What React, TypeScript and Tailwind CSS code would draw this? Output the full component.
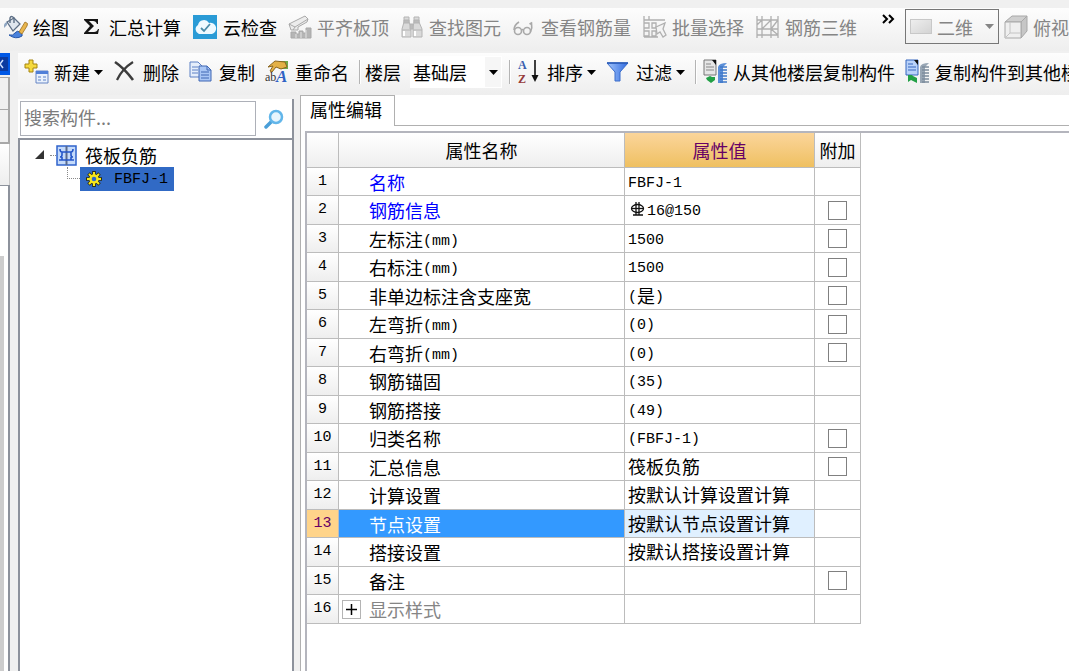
import { ReactNode } from "react";
import clsx from "clsx";

type PropertyRow = {
  name: string;
  value?: string;
  rebar?: boolean;
  extra?: boolean;
  tone?: "blue" | "gray";
  expandable?: boolean;
};

const rows: PropertyRow[] = [
  { name: "名称", value: "FBFJ-1", tone: "blue" },
  { name: "钢筋信息", value: "16@150", rebar: true, extra: true, tone: "blue" },
  { name: "左标注(mm)", value: "1500", extra: true },
  { name: "右标注(mm)", value: "1500", extra: true },
  { name: "非单边标注含支座宽", value: "(是)", extra: true },
  { name: "左弯折(mm)", value: "(0)", extra: true },
  { name: "右弯折(mm)", value: "(0)", extra: true },
  { name: "钢筋锚固", value: "(35)" },
  { name: "钢筋搭接", value: "(49)" },
  { name: "归类名称", value: "(FBFJ-1)", extra: true },
  { name: "汇总信息", value: "筏板负筋", extra: true },
  { name: "计算设置", value: "按默认计算设置计算" },
  { name: "节点设置", value: "按默认节点设置计算" },
  { name: "搭接设置", value: "按默认搭接设置计算" },
  { name: "备注", extra: true },
  { name: "显示样式", tone: "gray", expandable: true },
];

const SELECTED = 13;

// Latin letters and digits are half the width of a Chinese character
const Mixed = ({ text }: { text: string }) => (
  <>
    {text.split(/([\x20-\x7e]+)/).map((part, i) =>
      i % 2 ? (
        <span key={i} className="align-[2px] font-['Liberation_Mono',monospace] text-[15px] leading-none">
          {part}
        </span>
      ) : (
        part
      )
    )}
  </>
);

/* ---------- icons ---------- */

const PaintIcon = () => (
  <svg viewBox="0 0 24 24" className="h-6 w-6 shrink-0">
    <path d="M3 7l7-4 6 6-7 7z" fill="#dfe6ee" stroke="#5d6f86" strokeWidth="1.3" />
    <path d="M6 8V3q1-3 4 0v5" fill="none" stroke="#5d6f86" strokeWidth="1.4" />
    <path d="M3 7q-4 1-3 6l3-3z" fill="#8fa6c2" />
    <path d="M5 20q4 1 6-2t5-1 2 4q-6 4-13-1z" fill="#4a82dc" stroke="#2455a8" />
    <path d="M15 17l6-10q4 1 2 4l-5 8z" fill="#e9b64d" stroke="#9c7024" strokeWidth=".8" />
  </svg>
);

const SigmaIcon = () => (
  <svg viewBox="0 0 24 24" className="h-6 w-6 shrink-0">
    <path d="M4 4h14v5h-1q-1-3-4-3H9l5 5-6 6h6q3 0 4-3h1l-1 5H4v-1l6-7-6-6z" fill="#151515" />
  </svg>
);

const CloudIcon = () => (
  <svg viewBox="0 0 26 24" className="h-6 w-[26px] shrink-0">
    <path d="M1 0h24v24H1z" fill="#2a9bd6" />
    <path d="M7 19a5 5 0 0 1-1-9 6 6 0 0 1 11-2 5.500 5.500 0 0 1 3 11z" fill="#eff9ff" />
    <path d="M9 13l3 3 6-7" fill="none" stroke="#4b8ba8" strokeWidth="1.800" />
  </svg>
);

const AlignSlabIcon = () => (
  <svg viewBox="0 0 24 24" className="h-6 w-6 shrink-0" stroke="#a9a9a9" fill="#ececec">
    <path d="M1 9L17 1l3 3-1 3-9 5v3H3z" />
    <path d="M1 9l6 3 13-8M7 12l-2 3" fill="none" />
    <path d="M3 17h5v2h3v-3h4v2h3v-5h5v10H3z" fill="#b5b5b5" />
    <path d="M8 19v4M13 17v6M18 15v8" stroke="#e4e4e4" />
  </svg>
);

const BinocularsIcon = () => (
  <svg viewBox="0 0 24 24" className="h-6 w-6 shrink-0" stroke="#b4b4b4" fill="#dadada">
    <path d="M4 2h5v5l2 5v10H2v-8l2-7zM14 2h5v5l3 7v8h-9V12l1-5z" />
    <path d="M10 9h3v5h-3zM4 5h5v3H4zM14 5h5v3h-5z" fill="#bbb" />
    <path d="M2 15h9M13 15h9" />
    <path d="M4 16v5M15 16v5" stroke="#fff" strokeWidth="2" />
  </svg>
);

const GlassesIcon = () => (
  <svg viewBox="0 0 24 24" className="h-6 w-6 shrink-0" stroke="#a9a9a9" fill="none" strokeWidth="1.600">
    <circle cx="6" cy="16" r="3.500" />
    <circle cx="15" cy="16" r="3.500" />
    <path d="M9.500 15q1-1 2 0M2 15q0-5 5-8M18.500 17q2-4 1-9l-2 1" />
  </svg>
);

const BatchIcon = () => (
  <svg viewBox="0 0 25 24" className="h-6 w-[25px] shrink-0" stroke="#b0b0b0" fill="none" strokeWidth="1.300">
    <path d="M2 1v21M7 1v4M2 5h21M2 8h5v5H2M2 16h5v5H2M10 8h4v5h-4zM10 16h4v5h-4zM2 22h14" />
    <path d="M14 12l9-4-2 6 3 6-3 2-3-5-3 2z" fill="#f4f4f4" />
  </svg>
);

const RebarIcon = () => (
  <svg viewBox="0 0 25 24" className="h-6 w-[25px] shrink-0" stroke="#b0b0b0" fill="none" strokeWidth="1.300">
    <path d="M2 1v22M7 1v22M16 1v22M23 1v22M2 5h21M2 14h21M2 20h21M2 10l5-5M7 14l9-9M16 14l7-9M16 14l7 6" />
  </svg>
);

const CubeIcon = () => (
  <svg viewBox="0 0 24 24" className="h-6 w-6 shrink-0" stroke="#a8a8a8" fill="#dedede">
    <path d="M1 7l7-6h15l-6 6z" fill="#cfcfcf" />
    <path d="M17 7l6-6v15l-6 7z" fill="#c6c6c6" />
    <path d="M1 7h16v16H1z" fill="#efefef" />
    <path d="M6 7v11h11M6 18l-5 5" fill="none" stroke="#c4c4c4" />
  </svg>
);

const NewIcon = () => (
  <svg viewBox="0 0 25 26" className="h-[26px] w-[25px] shrink-0">
    <path d="M5 1h4v4h4v4H9v4H5V9H1V5h4z" fill="#f5d93d" stroke="#a58410" />
    <path d="M12 12h12v12H12z" fill="#e9f1fc" stroke="#6484c4" />
    <path d="M12 12h12v3H12z" fill="#4f7fd8" />
    <path d="M14 18h3M19 18h3M14 21h3M19 21h3" stroke="#8aa7d8" strokeWidth="1.500" />
  </svg>
);

const DeleteIcon = () => (
  <svg viewBox="0 0 25 24" className="h-6 w-[25px] shrink-0" stroke="#3c3c3c" fill="none">
    <path d="M2 2q9 6 18 18" strokeWidth="2.600" />
    <path d="M20 2Q9 9 4 20" strokeWidth="2.200" />
  </svg>
);

const CopyIcon = () => (
  <svg viewBox="0 0 25 24" className="h-6 w-[25px] shrink-0" stroke="#5d80c4">
    <path d="M1 2h8l4 4v11H1z" fill="#e5eefb" />
    <path d="M3 7h6M3 10h6M3 13h6" />
    <path d="M10 6h8l4 4v11H10z" fill="#a9c6f5" stroke="#3f66b4" />
    <path d="M18 6v4h4M12 12h8M12 15h8M12 18h8" fill="none" stroke="#3f66b4" />
  </svg>
);

const RenameIcon = () => (
  <svg viewBox="0 0 25 26" className="h-[26px] w-[25px] shrink-0 overflow-visible">
    <path d="M14 2h9v8h-9z" fill="#6fa84a" />
    <path d="M3 8l7-6 10 1 2 5-6 2-5-2-4 5-2-1 3-5z" fill="#e3b046" stroke="#8a6520" />
    <text x="0" y="22" fontSize="12" fontFamily="Liberation Serif, serif" fill="#333">
      ab
    </text>
    <text x="11" y="23" fontSize="17" fontWeight="bold" fontStyle="italic" fontFamily="Liberation Serif, serif" fill="#2f62c4">
      A
    </text>
  </svg>
);

const SortIcon = () => (
  <svg viewBox="0 0 25 26" className="h-[26px] w-[25px] shrink-0 overflow-visible">
    <text x="1" y="10" fontSize="12" fontWeight="bold" fontFamily="Liberation Serif, serif" fill="#3a5fae">
      A
    </text>
    <text x="1" y="24" fontSize="12" fontWeight="bold" fontFamily="Liberation Serif, serif" fill="#963a3a">
      Z
    </text>
    <path d="M18 1v16" stroke="#111" strokeWidth="1.600" />
    <path d="M14.500 16h7L18 23z" fill="#111" />
  </svg>
);

const FilterIcon = () => (
  <svg viewBox="0 0 25 24" className="h-6 w-[25px] shrink-0">
    <defs>
      <linearGradient id="funnel">
        <stop offset="0" stopColor="#a4c6fb" />
        <stop offset="1" stopColor="#2f6ae0" />
      </linearGradient>
    </defs>
    <path d="M1 3h21L14 12v9H9v-9z" fill="url(#funnel)" stroke="#3a6cca" />
    <path d="M1 3h21" stroke="#2d5cb8" strokeWidth="1.600" />
  </svg>
);

const FloorCopyIcon = ({ blue }: { blue?: boolean }) => (
  <svg viewBox="0 0 25 26" className="h-[26px] w-[25px] shrink-0">
    <path d="M1 1h12v15H1z" fill={blue ? "#b9d2fa" : "#e6e6e6"} stroke={blue ? "#3767be" : "#777"} />
    <path d="M3 5h5M3 8h8M3 11h8" stroke={blue ? "#3767be" : "#888"} />
    <path d="M9 1h4v5z" fill="#111" />
    {blue ? (
      <path d="M3 16v7l3-2 6 3v-5l-4-2-1-1z" fill="#22a046" />
    ) : (
      <path d="M3 19l4-2 2 1h3v3l-4 3-4-3z" fill="#22a046" />
    )}
    <path d="M15 24V8q1-4 9-4l-4 4v16z" fill={blue ? "#98a6b4" : "#5b8fd8"} />
    <path
      d="M17 8h7M17 11h7M17 14h7M17 17h7M17 20h7M17 23h7"
      fill="none"
      stroke={blue ? "#7c8c9c" : "#3f78c8"}
      strokeWidth="1.500"
    />
  </svg>
);

const RebarMark = () => (
  <svg viewBox="0 0 16 16" className="ml-[2px] size-4 shrink-0" stroke="#111" fill="none" strokeWidth="1.300">
    <path d="M6 1v13M9 1v13M3 14h10" />
    <ellipse cx="7.500" cy="7.500" rx="6" ry="4" />
    <path d="M1 7.500h13" />
  </svg>
);

const Caret = () => (
  <svg viewBox="0 0 9 5" className="ml-1 h-[5px] w-[9px] shrink-0" fill="currentColor">
    <path d="M0 0h9L4.500 5z" />
  </svg>
);

/* ---------- toolbar pieces ---------- */

type ToolProps = { icon: ReactNode; label: string; disabled?: boolean; menu?: boolean };

const ModeTool = ({ icon, label, disabled }: ToolProps) => (
  <button
    type="button"
    disabled={disabled}
    className="mr-[11px] flex shrink-0 items-center gap-[5px] whitespace-nowrap text-black disabled:text-[#858585]"
  >
    {icon}
    {label}
  </button>
);

const Tool = ({ icon, label, menu }: ToolProps) => (
  <button type="button" className="mr-[10px] flex shrink-0 items-center whitespace-nowrap">
    {icon}
    <span className="ml-[5px]">{label}</span>
    {menu && <Caret />}
  </button>
);

const Separator = () => <span className="h-6 w-[2px] shrink-0 border-l border-[#b4b4b4] bg-white" />;

const ModeBar = () => (
  <div className="flex h-[43px] shrink-0 items-center bg-linear-to-b from-[#fdfdfd] to-[#eeeeee] pb-[6px] pl-1">
    <ModeTool icon={<PaintIcon />} label="绘图" />
    <ModeTool icon={<SigmaIcon />} label="汇总计算" />
    <ModeTool icon={<CloudIcon />} label="云检查" />
    <ModeTool icon={<AlignSlabIcon />} label="平齐板顶" disabled />
    <ModeTool icon={<BinocularsIcon />} label="查找图元" disabled />
    <ModeTool icon={<GlassesIcon />} label="查看钢筋量" disabled />
    <ModeTool icon={<BatchIcon />} label="批量选择" disabled />
    <ModeTool icon={<RebarIcon />} label="钢筋三维" disabled />
    <button type="button" aria-label="更多" className="ml-[14px] mr-[10px] shrink-0 self-start pt-[6px]">
      <svg viewBox="0 0 13 10" className="h-[10px] w-[13px]" fill="none" stroke="#000" strokeWidth="2">
        <path d="M1 1l4 4-4 4M7 1l4 4-4 4" />
      </svg>
    </button>
    <button
      type="button"
      disabled
      className="mr-[5px] flex h-[35px] w-[94px] shrink-0 items-center border border-[#777] pl-1 text-[#858585]"
    >
      <span className="mr-[5px] h-[15px] w-[22px] border border-[#c8c8c8] bg-linear-to-br from-[#eee] to-[#d4d4d4]" />
      二维
      <span className="ml-2">
        <Caret />
      </span>
    </button>
    <ModeTool icon={<CubeIcon />} label="俯视" disabled />
  </div>
);

const EditBar = () => (
  <div className="flex h-[42px] shrink-0 items-center bg-linear-to-b from-[#fdfdfd] to-[#eeeeee] pb-1 pl-[6px]">
    <Tool icon={<NewIcon />} label="新建" menu />
    <Tool icon={<DeleteIcon />} label="删除" />
    <Tool icon={<CopyIcon />} label="复制" />
    <Tool icon={<RenameIcon />} label="重命名" />
    <Separator />
    <label htmlFor="floor" className="ml-1 mr-[9px] shrink-0">
      楼层
    </label>
    <div className="relative mr-[7px] flex h-8 w-[92px] shrink-0 items-center bg-white">
      <select id="floor" className="h-full w-full appearance-none pl-[3px] outline-none">
        <option>基础层</option>
      </select>
      <span className="pointer-events-none absolute inset-y-px right-px flex w-4 items-center justify-center bg-[#f6f6f6] pr-1">
        <Caret />
      </span>
    </div>
    <Separator />
    <span className="w-[6px] shrink-0" />
    <Tool icon={<SortIcon />} label="排序" menu />
    <Tool icon={<FilterIcon />} label="过滤" menu />
    <Separator />
    <span className="w-[6px] shrink-0" />
    <Tool icon={<FloorCopyIcon />} label="从其他楼层复制构件" />
    <Tool icon={<FloorCopyIcon blue />} label="复制构件到其他楼层" />
  </div>
);

/* ---------- left side ---------- */

// The right-hand edge of the docked module bar
const DockEdge = () => (
  <div className="flex w-[10px] shrink-0 flex-col">
    <button
      type="button"
      aria-label="关闭"
      className="flex h-[22px] shrink-0 items-center border-y-4 border-r-2 border-[#0058e6] bg-[#0b3aa0]"
    >
      <svg viewBox="0 0 6 10" className="h-[10px] w-[6px]" fill="none" stroke="#cfe0ff" strokeWidth="1.500">
        <path d="M3 1L0 5l3 4" />
      </svg>
    </button>
    <div className="mt-[2px] h-[33px] shrink-0 border-y border-r-2 border-[#a8a8a8]" />
    <div className="h-[34px] shrink-0 border-b-2 border-r-2 border-[#a8a8a8]" />
    <div className="h-[41px] shrink-0 border-r border-[#c8c8c8] bg-linear-to-b from-white to-[#eeeeee]" />
    <div className="flex-1 border-r-2 border-t border-[#8d929c] bg-white pt-[70px]">
      <div className="h-full w-1 bg-[#cdcdcd]" />
    </div>
  </div>
);

const ComponentTree = () => (
  <section className="mt-1 flex w-[276px] shrink-0 flex-col border-r-2 border-[#8d929c] bg-white">
    <div className="flex h-[39px] shrink-0 items-center pl-[2px]">
      <input
        aria-label="搜索构件"
        placeholder="搜索构件..."
        className="h-[35px] w-[236px] border border-[#adb0b8] px-[3px] pb-1 outline-none placeholder:text-[#7b7b7b]"
      />
      <button type="button" aria-label="搜索" className="ml-2">
        <svg viewBox="0 0 21 20" className="h-5 w-[21px]" fill="none">
          <path d="M2 18l6-6" stroke="#4a9fd8" strokeWidth="3.500" strokeLinecap="round" />
          <circle cx="12" cy="8" r="6" fill="#e8f5fd" stroke="#62b6ea" strokeWidth="2.500" />
        </svg>
      </button>
    </div>
    <ul className="flex-1 border-l-2 border-t-2 border-[#8d929c] pt-[3px]">
      <li>
        <div className="flex h-6 items-center pl-[15px]">
          <svg viewBox="0 0 10 10" className="mr-[5px] h-[10px] w-[10px]" fill="#333">
            <path d="M9 0v9H0z" />
          </svg>
          <span className="w-[6px] border-t border-dotted border-[#888]" />
          <svg viewBox="0 0 21 21" className="mr-2 size-[21px]">
            <path d="M1 1h19v19H1z" fill="#c4dafa" stroke="#2f63cc" strokeWidth="1.500" />
            <path d="M10.500 1v19" stroke="#5a6b8c" strokeWidth="2" />
            <path
              d="M4 4q0 3 2 3h9q2 0 2-3M3 15h15M6 7v3q0 2-2 2M15 7v3q0 2 2 2M6 12v3M15 12v3"
              fill="none"
              stroke="#2456c8"
              strokeWidth="1.600"
            />
          </svg>
          筏板负筋
        </div>
        <ul className="pl-[47px]">
          <li className="flex">
            <span className="h-3 w-[13px] border-b border-l border-dotted border-[#888]" />
            <div className="flex h-6 w-[94px] items-center bg-[#316ac5] pl-[6px]">
              <svg viewBox="0 0 16 16" className="mr-3 size-4 shrink-0">
                <path
                  d="M8 0v16M0 8h16M2.500 2.500l11 11M13.500 2.500l-11 11"
                  stroke="#2c2c10"
                  strokeWidth="3.600"
                />
                <path d="M8 1v14M1 8h14M3 3l10 10M13 3L3 13" stroke="#f6e71c" strokeWidth="2" />
                <circle cx="8" cy="8" r="3.500" fill="#316ac5" stroke="#f6e71c" strokeWidth="2.400" />
              </svg>
              <Mixed text="FBFJ-1" />
            </div>
          </li>
        </ul>
      </li>
    </ul>
  </section>
);

/* ---------- property grid ---------- */

const PropertyTable = () => (
  <table className="w-[554px] table-fixed border-separate border-spacing-0 leading-6">
    <thead>
      <tr className="h-[35px] bg-linear-to-b from-white to-[#eeeeee] *:border-b *:border-r *:border-[#bcbcbc] *:p-0 *:font-normal">
        <th className="w-8" />
        <th className="w-[286px]">属性名称</th>
        <th className="w-[190px] bg-linear-to-b from-[#fbd59a] to-[#efc060] text-[#660066]">属性值</th>
        <th className="w-[46px]">附加</th>
      </tr>
    </thead>
    <tbody>
      {rows.map((row, i) => {
        const selected = i + 1 === SELECTED;
        return (
          <tr key={row.name} className="odd:h-7 even:h-[29px] *:border-b *:border-r *:border-[#bcbcbc] *:p-0">
            <th
              className={clsx(
                "text-center font-['Liberation_Mono',monospace] text-[15px] font-normal",
                selected ? "bg-[#ffd48a] text-[#660066]" : "bg-linear-to-b from-white to-[#eeeeee]"
              )}
            >
              {i + 1}
            </th>
            <td
              className={clsx(
                selected && "bg-[#3399ff] text-white",
                row.tone === "blue" && "text-[#0000ff]",
                row.tone === "gray" && "text-[#858585]"
              )}
            >
              <div className="flex items-center">
                <span className="flex w-[30px] shrink-0 pl-[3px]">
                  {row.expandable && (
                    <button
                      type="button"
                      aria-label="展开"
                      className="flex size-[19px] items-center justify-center border border-[#b4b4b4]"
                    >
                      <svg viewBox="0 0 11 11" className="size-[11px]" stroke="#000" strokeWidth="1.500">
                        <path d="M0 5.500h11M5.500 0v11" />
                      </svg>
                    </button>
                  )}
                </span>
                <span>
                  <Mixed text={row.name} />
                </span>
              </div>
            </td>
            <td className={clsx(selected && "bg-[#e0f0ff]")}>
              <div className="flex items-center gap-px pb-[2px] pl-[3px]">
                {row.rebar && <RebarMark />}
                <span>
                  <Mixed text={row.value ?? ""} />
                </span>
              </div>
            </td>
            <td>
              {row.extra && (
                <input
                  type="checkbox"
                  aria-label={row.name}
                  className="mx-auto block size-[19px] appearance-none border border-[#808080] bg-white checked:bg-[#3399ff]"
                />
              )}
            </td>
          </tr>
        );
      })}
    </tbody>
  </table>
);

const PropertyEditor = () => (
  <section className="ml-[6px] flex min-w-0 flex-1 flex-col">
    <div className="flex h-[31px] shrink-0 bg-white">
      <button type="button" className="w-[95px] border-x border-t border-[#b0b0b0] pb-1 pr-[3px]">
        属性编辑
      </button>
      <span className="flex-1 border-b border-[#b0b0b0]" />
    </div>
    <div className="flex-1 border-l border-[#b0b0b0] bg-white pl-1 pt-[5px]">
      <div className="h-full border-l-2 border-t-2 border-[#b4b5bd]">
        <PropertyTable />
      </div>
    </div>
  </section>
);

export default function App() {
  return (
    <div className="flex h-screen flex-col overflow-hidden bg-[#f0f0f0] pt-2 font-['Noto_Sans_CJK_SC',sans-serif] text-[18px] leading-6 text-black">
      <ModeBar />
      <div className="mt-[2px] flex min-h-0 flex-1">
        <DockEdge />
        <main className="ml-2 flex min-w-0 flex-1 flex-col">
          <EditBar />
          <div className="flex min-h-0 flex-1">
            <ComponentTree />
            <PropertyEditor />
          </div>
        </main>
      </div>
    </div>
  );
}
